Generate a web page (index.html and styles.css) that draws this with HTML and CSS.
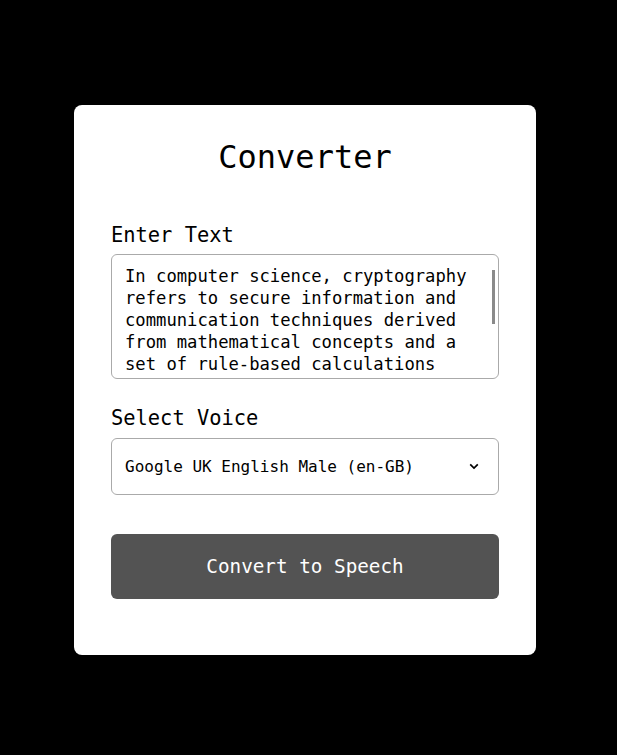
FILE: index.html
```html
<!DOCTYPE html>
<html lang="en">
<head>
<meta charset="utf-8">
<title>Converter</title>
<link rel="stylesheet" href="styles.css">
</head>
<body>
<main class="card">
  <h1 class="title">Converter</h1>
  <label class="label label-text" for="text">Enter Text</label>
  <div class="textarea-wrap">
    <textarea id="text" class="textarea">In computer science, cryptography refers to secure information and communication techniques derived from mathematical concepts and a set of rule-based calculations called algorithms, to transform messages in ways that are hard to decipher. These deterministic algorithms are used for cryptographic key generation, digital signing, verification to protect data privacy.</textarea>
    <span class="scroll-thumb" aria-hidden="true"></span>
  </div>
  <label class="label label-voice" for="voice">Select Voice</label>
  <div class="select-wrap">
    <select id="voice" class="select">
      <option>Google UK English Male (en-GB)</option>
    </select>
    <svg class="chevron" width="10" height="7" viewBox="0 0 10 7" aria-hidden="true"><path d="M1.2 1.3 L5 5 L8.8 1.3" fill="none" stroke="#000" stroke-width="1.7"/></svg>
  </div>
  <button class="button" type="button">Convert to Speech</button>
</main>
</body>
</html>
```
FILE: styles.css
```css
* { box-sizing: border-box; }
html, body { margin: 0; }
body {
  background: #000;
  font-family: "DejaVu Sans Mono", "Liberation Mono", monospace;
  color: #000;
  padding: 105px 0 0 74px;
  min-height: 755px;
}
.card {
  width: 462px;
  height: 550px;
  background: #fff;
  border-radius: 8px;
  padding: 32px 37px 56px;
  display: flex;
  flex-direction: column;
}
.title {
  margin: 0;
  font-size: 32px;
  font-weight: normal;
  line-height: 40px;
  text-align: center;
}
.label {
  display: block;
  font-size: 20.4px;
  line-height: 24px;
}
.label-text { margin-top: 46px; }
.label-voice { margin-top: 27px; }
.textarea-wrap {
  position: relative;
  margin-top: 7px;
  height: 125px;
}
.textarea {
  display: block;
  width: 388px;
  height: 125px;
  border: 1px solid #aaa;
  border-radius: 6px;
  padding: 10px 30px 10px 13px;
  font-family: inherit;
  font-size: 17.2px;
  line-height: 22px;
  color: #000;
  resize: none;
  overflow: hidden;
  outline: none;
}
.scroll-thumb {
  position: absolute;
  left: 381px;
  top: 16px;
  width: 3px;
  height: 54px;
  background: #8a8a8a;
}
.select-wrap {
  position: relative;
  margin-top: 8px;
}
.select {
  appearance: none;
  -webkit-appearance: none;
  display: block;
  width: 388px;
  height: 57px;
  border: 1px solid #aaa;
  border-radius: 6px;
  background: #fff;
  padding: 0 13px;
  font-family: inherit;
  font-size: 16px;
  color: #000;
  outline: none;
}
.chevron {
  position: absolute;
  right: 20px;
  top: 25px;
  pointer-events: none;
}
.button {
  margin-top: 39px;
  width: 388px;
  height: 65px;
  border: none;
  border-radius: 6px;
  background: #535353;
  color: #fff;
  font-family: inherit;
  font-size: 19.3px;
  cursor: pointer;
}
```
